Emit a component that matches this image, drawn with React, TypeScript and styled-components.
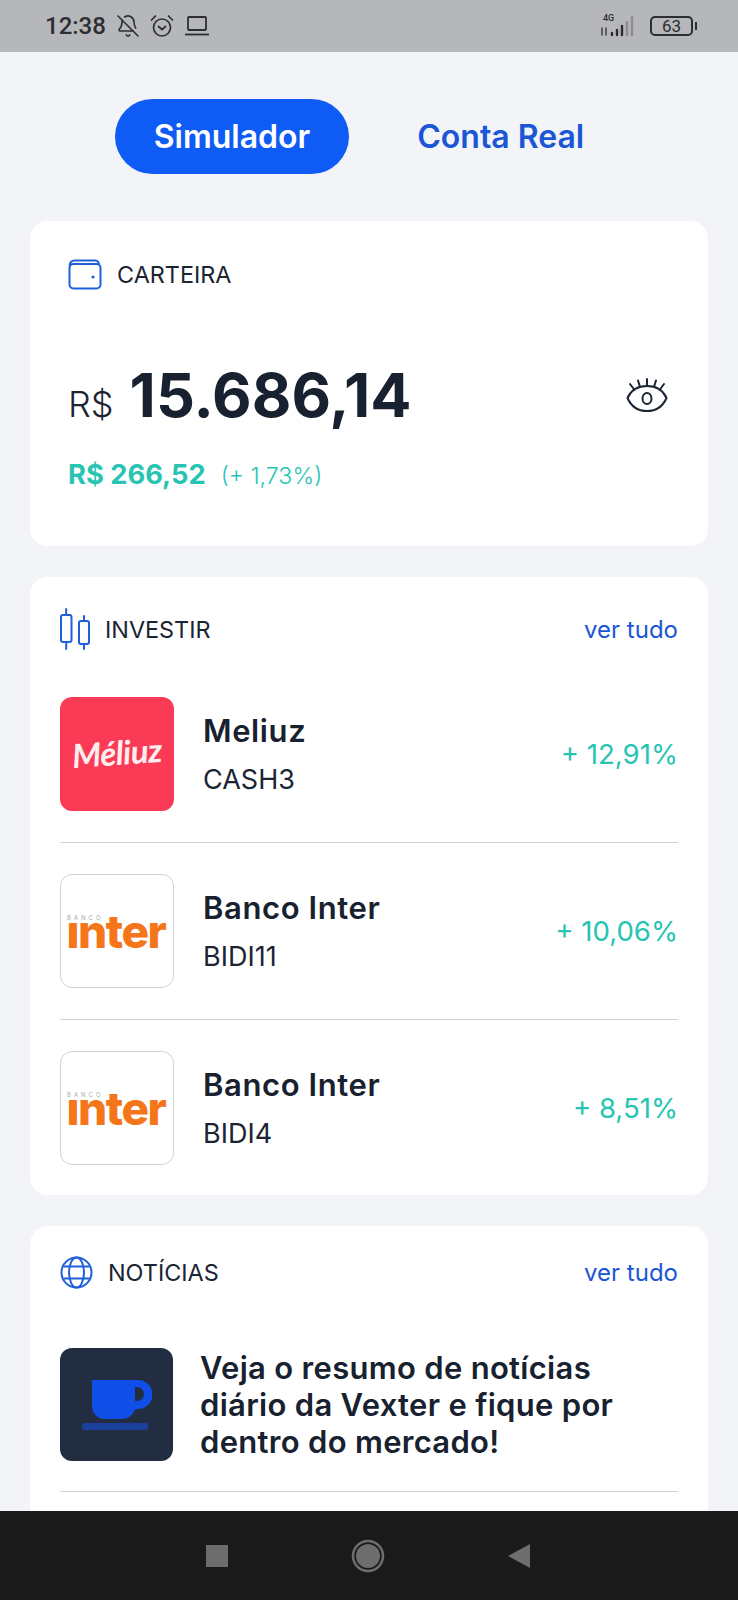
import { BellOff } from "lucide-react";
import styled, { createGlobalStyle } from "styled-components";

const GlobalStyle = createGlobalStyle`
  html, body {
    margin: 0;
    padding: 0;
    background: #f3f4f8;
    font-family: Inter, "Noto Sans", sans-serif;
  }
  * {
    box-sizing: border-box;
  }
`;

const Screen = styled.div`
  width: 738px;
  height: 1600px;
  display: flex;
  flex-direction: column;
  overflow: hidden;
  background: #f3f4f8;
`;

const StatusBar = styled.div`
  height: 52px;
  flex-shrink: 0;
  display: flex;
  align-items: center;
  justify-content: space-between;
  padding: 14px 45px 14px 45px;
  background: #b6b7ba;
  color: #2c2e31;
`;

const StatusGroup = styled.div<{ $gap: number }>`
  display: flex;
  align-items: center;
  gap: ${({ $gap }) => $gap}px;
`;

const Clock = styled.span`
  font-family: Roboto, sans-serif;
  font-size: 24px;
  font-weight: 500;
`;

const Battery = styled.div`
  position: relative;
  width: 43px;
  height: 20px;
  border: 2px solid #2c2e31;
  border-radius: 5px;
  display: flex;
  align-items: center;
  justify-content: center;
  font-family: Roboto, sans-serif;
  font-size: 17px;

  &::after {
    content: "";
    position: absolute;
    right: -6px;
    top: 4px;
    width: 2px;
    height: 8px;
    background: #2c2e31;
  }
`;

const Network = styled.div`
  position: relative;
  width: 40px;
  height: 22px;
`;

const NetworkLabel = styled.span`
  position: absolute;
  left: 3px;
  top: -2px;
  font-family: Roboto, sans-serif;
  font-size: 9px;
  font-weight: 500;
`;

const Main = styled.main`
  flex: 1;
  min-height: 0;
  overflow: hidden;
  padding: 0 30px;
`;

const Tabs = styled.div`
  display: flex;
  justify-content: center;
  gap: 29px;
  padding: 47px 0 47px;
`;

const Tab = styled.div<{ $active?: boolean }>`
  height: 75px;
  padding: 0 39px;
  display: flex;
  align-items: center;
  border-radius: 38px;
  font-size: 32px;
  font-weight: 600;
  color: ${({ $active }) => ($active ? "#ffffff" : "#1a56d6")};
  background: ${({ $active }) => ($active ? "#0f5bf5" : "transparent")};
`;

const Card = styled.section<{ $pad: string; $height?: number }>`
  background: #ffffff;
  border-radius: 18px;
  padding: ${({ $pad }) => $pad};
  margin-bottom: 31px;
  ${({ $height }) => ($height ? `height: ${$height}px;` : "")}
`;

const CardHeader = styled.div<{ $below?: number }>`
  display: flex;
  align-items: center;
  justify-content: space-between;
  margin-bottom: ${({ $below }) => $below ?? 0}px;
`;

const HeaderTitle = styled.div<{ $gap: number }>`
  display: flex;
  align-items: center;
  gap: ${({ $gap }) => $gap}px;
`;

const Label = styled.span`
  font-size: 23.4px;
  font-weight: 400;
  color: #1b2433;
`;

const SeeAll = styled.span`
  font-size: 24px;
  font-weight: 400;
  color: #1a56d6;
`;

const BalanceRow = styled.div`
  display: flex;
  align-items: center;
  justify-content: space-between;
  margin-top: 68px;
`;

const Balance = styled.div`
  display: flex;
  align-items: baseline;
  gap: 16px;
`;

const Currency = styled.span`
  font-size: 36px;
  font-weight: 300;
  color: #1b2433;
`;

const Amount = styled.span`
  font-size: 61px;
  font-weight: 700;
  color: #18212f;
`;

const Gain = styled.div`
  display: flex;
  align-items: baseline;
  gap: 15px;
  margin-top: 26px;
  color: #27c4b4;
`;

const GainValue = styled.span`
  font-size: 27.3px;
  font-weight: 700;
`;

const GainPercent = styled.span`
  font-size: 23.2px;
  font-weight: 300;
`;

const StockRow = styled.div<{ $last?: boolean }>`
  display: flex;
  align-items: center;
  padding: 31px 0;
  border-bottom: ${({ $last }) => ($last ? "none" : "1px solid #d0d2d4")};
  ${({ $last }) => ($last ? "padding-bottom: 0;" : "")}
`;

const LogoTile = styled.div<{ $bg: string; $border?: boolean }>`
  position: relative;
  width: 114px;
  height: 114px;
  flex-shrink: 0;
  display: flex;
  align-items: center;
  justify-content: center;
  border-radius: 12px;
  background: ${({ $bg }) => $bg};
  border: ${({ $border }) => ($border ? "1px solid #cfd1d3" : "none")};
`;

const MeliuzLogo = styled.span`
  font-family: Lato, sans-serif;
  font-style: italic;
  font-size: 33px;
  font-weight: 700;
  letter-spacing: -0.5px;
  color: #fdeef0;
  transform: rotate(-4deg);
  margin-bottom: 5px;
`;

const InterWord = styled.span`
  font-family: Inter, sans-serif;
  font-size: 46px;
  font-weight: 800;
  line-height: 0.6;
  letter-spacing: -1.5px;
  color: #f5761a;
  margin: 2px 2px 0 0;
`;

const InterBanco = styled.span`
  position: absolute;
  left: 6px;
  top: 39px;
  font-size: 6px;
  line-height: 7px;
  letter-spacing: 3px;
  color: #a9a9a9;
`;

const StockInfo = styled.div`
  flex: 1;
  margin-left: 29px;
  padding-top: 2px;
  display: flex;
  flex-direction: column;
  gap: 11px;
`;

const StockName = styled.span`
  font-size: 31px;
  font-weight: 600;
  letter-spacing: 0.6px;
  line-height: 38px;
  color: #18212f;
`;

const Ticker = styled.span`
  font-size: 27px;
  font-weight: 400;
  line-height: 38px;
  color: #1b2433;
`;

const Change = styled.span`
  font-size: 27.6px;
  font-weight: 400;
  color: #27c4b4;
`;

const NewsRow = styled.div`
  display: flex;
  align-items: center;
  margin-top: 59px;
  padding-bottom: 30px;
  border-bottom: 1px solid #d0d2d4;
`;

const NewsTile = styled.div`
  width: 113px;
  height: 113px;
  flex-shrink: 0;
  display: flex;
  align-items: center;
  justify-content: center;
  border-radius: 12px;
  background: #232d42;
`;

const NewsText = styled.p`
  margin: 0 0 0 27px;
  font-size: 31px;
  font-weight: 600;
  letter-spacing: 0.3px;
  line-height: 37px;
  color: #18212f;
`;

const NavBar = styled.nav`
  height: 89px;
  flex-shrink: 0;
  display: flex;
  align-items: center;
  justify-content: space-between;
  padding: 0 207px 0 205px;
  background: #1a1a1a;
`;

const stocks = [
  { name: "Meliuz", ticker: "CASH3", change: "+ 12,91%", brand: "meliuz" },
  { name: "Banco Inter", ticker: "BIDI11", change: "+ 10,06%", brand: "inter" },
  { name: "Banco Inter", ticker: "BIDI4", change: "+ 8,51%", brand: "inter" },
];

function AlarmIcon() {
  return (
    <svg width="24" height="24" viewBox="0 0 24 24" fill="none" stroke="#2c2e31" strokeWidth="1.7" strokeLinecap="round" strokeLinejoin="round">
      <circle cx="12" cy="13.5" r="8.5" />
      <path d="M8.5 12.5l3.5 3 3.5-3M1.5 6l4-4M22.5 6l-4-4" />
    </svg>
  );
}

function LaptopIcon() {
  return (
    <svg width="26" height="22" viewBox="0 0 26 22" fill="none" stroke="#2c2e31" strokeWidth="1.8">
      <rect x="4" y="2" width="18" height="13" rx="1" />
      <path d="M1 19.5h24" />
    </svg>
  );
}

function SignalIcon() {
  return (
    <svg width="40" height="22" viewBox="0 0 40 22" fill="none" strokeLinecap="round">
      <path d="M2 20v-7M6 13v7" stroke="#2c2e31" strokeWidth="1.3" />
      <path d="M12 20v-2M17 20v-5M22 20v-9" stroke="#2c2e31" strokeWidth="2.4" />
      <path d="M27 20V7M32 20V2" stroke="#8d8e91" strokeWidth="2.4" />
    </svg>
  );
}

function WalletIcon() {
  return (
    <svg width="34" height="31" viewBox="0 0 34 31" fill="none" stroke="#1f5fd8" strokeWidth="2">
      <path d="M1.5 6.5A5 5 0 0 1 6.5 1.5H27a4 4 0 0 1 4 4" />
      <rect x="1.5" y="5" width="31" height="24.5" rx="4" />
      <circle cx="25" cy="18" r="1.6" fill="#1f5fd8" stroke="none" />
    </svg>
  );
}

function CandlesIcon() {
  return (
    <svg width="30" height="42" viewBox="0 0 30 42" fill="none" stroke="#1f5fd8" strokeWidth="2" strokeLinecap="round">
      <rect x="1" y="7" width="10.5" height="27" rx="2" />
      <path d="M6.2 1v6M6.2 34v7" />
      <rect x="19" y="13" width="10" height="23" rx="2" />
      <path d="M24 8v5M24 36v5" />
    </svg>
  );
}

function GlobeIcon() {
  return (
    <svg width="33" height="33" viewBox="0 0 33 33" fill="none" stroke="#1f5fd8" strokeWidth="2">
      <circle cx="16.5" cy="16.5" r="15" />
      <ellipse cx="16.5" cy="16.5" rx="7.5" ry="15" />
      <path d="M3.5 10.5h26M3.5 22.5h26" />
    </svg>
  );
}

function EyeLashIcon() {
  return (
    <svg width="42" height="34" viewBox="0 0 42 34" fill="none" stroke="#1b2433" strokeWidth="2" strokeLinecap="round" strokeLinejoin="round">
      <path d="M1.5 20C5 12 12 8 21 8s16 4 19.500 12C37 28 30 33 21 33S5 28 1.500 20Z" />
      <ellipse cx="21" cy="20.500" rx="4.500" ry="5.500" />
      <path d="M21 1v7M12 2.500l2 6.500M30 2.500l-2 6.500M4 6l4.500 6M38 6l-4.500 6" />
    </svg>
  );
}

function CupIcon() {
  return (
    <svg width="70" height="50" viewBox="0 0 70 50" fill="none">
      <path d="M10 0H56A14.500 14.500 0 0 1 56 29H53.500C51 35 46 39 40 39H23C15 39 10 33 10 26Z" fill="#0f4fe8" />
      <path d="M53 7V21H55A7 7 0 0 0 55 7Z" fill="#232d42" />
      <rect x="0" y="43" width="66" height="7" rx="2" fill="#1a3f9c" />
    </svg>
  );
}

function NavIcons() {
  return (
    <>
      <svg width="24" height="24" viewBox="0 0 24 24">
        <rect width="22" height="22" x="1" y="1" fill="#6d6d6d" />
      </svg>
      <svg width="34" height="34" viewBox="0 0 34 34">
        <circle cx="17" cy="17" r="15" fill="none" stroke="#6d6d6d" strokeWidth="2.500" />
        <circle cx="17" cy="17" r="12" fill="#6d6d6d" />
      </svg>
      <svg width="24" height="26" viewBox="0 0 24 26">
        <path d="M1 13 23 1v24Z" fill="#6d6d6d" />
      </svg>
    </>
  );
}

export default function App() {
  return (
    <Screen>
      <GlobalStyle />
      <StatusBar>
        <StatusGroup $gap={10}>
          <Clock>12:38</Clock>
          <BellOff size={24} strokeWidth={1.6} />
          <AlarmIcon />
          <LaptopIcon />
        </StatusGroup>
        <StatusGroup $gap={10}>
          <Network>
            <NetworkLabel>4G</NetworkLabel>
            <SignalIcon />
          </Network>
          <Battery>63</Battery>
        </StatusGroup>
      </StatusBar>

      <Main>
        <Tabs>
          <Tab $active>Simulador</Tab>
          <Tab>Conta Real</Tab>
        </Tabs>

        <Card $pad="38px 40px 0 38px" $height={325}>
          <HeaderTitle $gap={15}>
            <WalletIcon />
            <Label>CARTEIRA</Label>
          </HeaderTitle>
          <BalanceRow>
            <Balance>
              <Currency>R$</Currency>
              <Amount>15.686,14</Amount>
            </Balance>
            <EyeLashIcon />
          </BalanceRow>
          <Gain>
            <GainValue>R$ 266,52</GainValue>
            <GainPercent>(+ 1,73%)</GainPercent>
          </Gain>
        </Card>

        <Card $pad="31px 30px 30px">
          <CardHeader $below={16}>
            <HeaderTitle $gap={15}>
              <CandlesIcon />
              <Label>INVESTIR</Label>
            </HeaderTitle>
            <SeeAll>ver tudo</SeeAll>
          </CardHeader>
          {stocks.map((stock, i) => (
            <StockRow key={stock.ticker} $last={i === stocks.length - 1}>
              {stock.brand === "meliuz" ? (
                <LogoTile $bg="#fb3a55">
                  <MeliuzLogo>Méliuz</MeliuzLogo>
                </LogoTile>
              ) : (
                <LogoTile $bg="#ffffff" $border>
                  <InterBanco>BANCO</InterBanco>
                  <InterWord>ınter</InterWord>
                </LogoTile>
              )}
              <StockInfo>
                <StockName>{stock.name}</StockName>
                <Ticker>{stock.ticker}</Ticker>
              </StockInfo>
              <Change>{stock.change}</Change>
            </StockRow>
          ))}
        </Card>

        <Card $pad="30px 30px 100px">
          <CardHeader>
            <HeaderTitle $gap={15}>
              <GlobeIcon />
              <Label>NOTÍCIAS</Label>
            </HeaderTitle>
            <SeeAll>ver tudo</SeeAll>
          </CardHeader>
          <NewsRow>
            <NewsTile>
              <CupIcon />
            </NewsTile>
            <NewsText>
              Veja o resumo de notícias
              <br />
              diário da Vexter e fique por
              <br />
              dentro do mercado!
            </NewsText>
          </NewsRow>
        </Card>
      </Main>

      <NavBar>
        <NavIcons />
      </NavBar>
    </Screen>
  );
}
